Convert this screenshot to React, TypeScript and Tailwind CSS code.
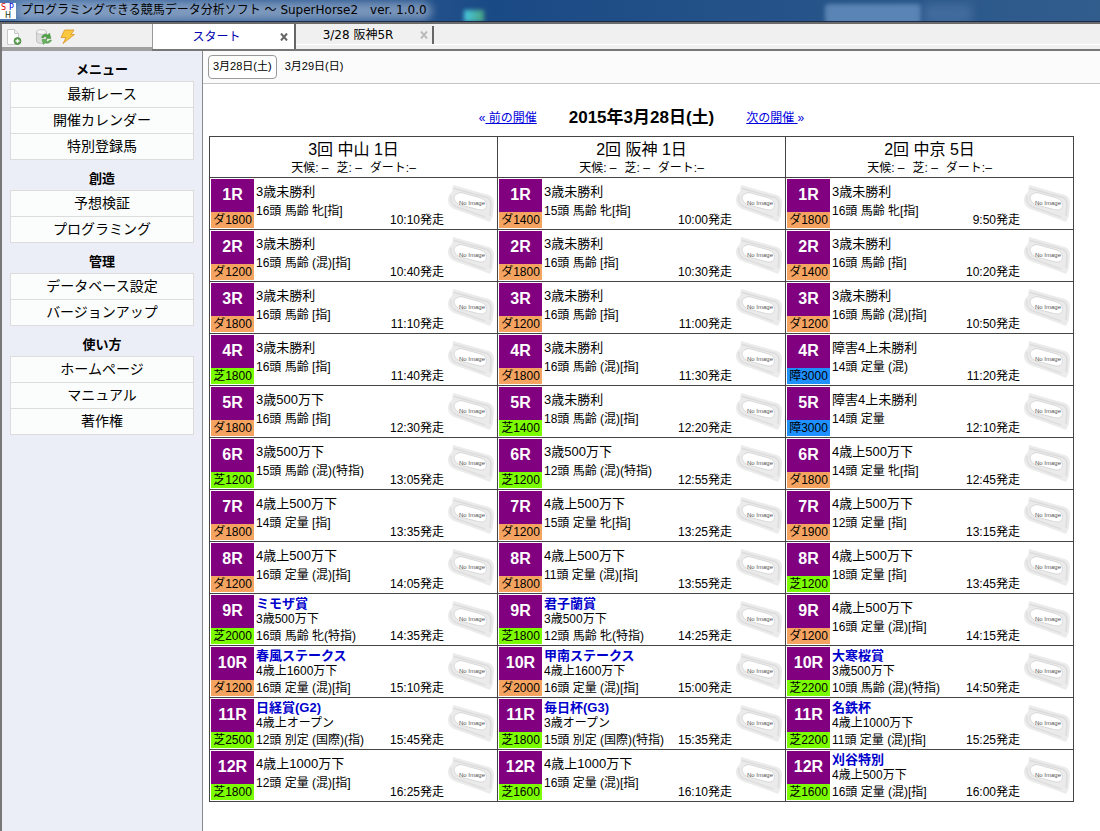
import type { ReactNode } from 'react'

type Race = {
    course: string
    name: string
    detail: string
    time: string
    title?: string
}

type Meeting = {
    name: string
    races: Race[]
}

const r = (course: string, name: string, detail: string, time: string, title?: string): Race => ({ course, name, detail, time, title })

const meetings: Meeting[] = [
    {
        name: '3回 中山 1日',
        races: [
            r('ダ1800', '3歳未勝利', '16頭 馬齢 牝[指]', '10:10'),
            r('ダ1200', '3歳未勝利', '16頭 馬齢 (混)[指]', '10:40'),
            r('ダ1800', '3歳未勝利', '16頭 馬齢 [指]', '11:10'),
            r('芝1800', '3歳未勝利', '16頭 馬齢 [指]', '11:40'),
            r('ダ1800', '3歳500万下', '16頭 馬齢 [指]', '12:30'),
            r('芝1200', '3歳500万下', '15頭 馬齢 (混)(特指)', '13:05'),
            r('ダ1800', '4歳上500万下', '14頭 定量 [指]', '13:35'),
            r('ダ1200', '4歳上500万下', '16頭 定量 (混)[指]', '14:05'),
            r('芝2000', '3歳500万下', '16頭 馬齢 牝(特指)', '14:35', 'ミモザ賞'),
            r('ダ1200', '4歳上1600万下', '16頭 定量 (混)[指]', '15:10', '春風ステークス'),
            r('芝2500', '4歳上オープン', '12頭 別定 (国際)(指)', '15:45', '日経賞(G2)'),
            r('芝1800', '4歳上1000万下', '12頭 定量 (混)[指]', '16:25'),
        ],
    },
    {
        name: '2回 阪神 1日',
        races: [
            r('ダ1400', '3歳未勝利', '15頭 馬齢 牝[指]', '10:00'),
            r('ダ1800', '3歳未勝利', '16頭 馬齢 [指]', '10:30'),
            r('ダ1200', '3歳未勝利', '16頭 馬齢 [指]', '11:00'),
            r('ダ1800', '3歳未勝利', '16頭 馬齢 (混)[指]', '11:30'),
            r('芝1400', '3歳未勝利', '18頭 馬齢 (混)[指]', '12:20'),
            r('芝1200', '3歳500万下', '12頭 馬齢 (混)(特指)', '12:55'),
            r('ダ1200', '4歳上500万下', '15頭 定量 牝[指]', '13:25'),
            r('ダ1800', '4歳上500万下', '11頭 定量 (混)[指]', '13:55'),
            r('芝1800', '3歳500万下', '12頭 馬齢 牝(特指)', '14:25', '君子蘭賞'),
            r('ダ2000', '4歳上1600万下', '16頭 定量 (混)[指]', '15:00', '甲南ステークス'),
            r('芝1800', '3歳オープン', '15頭 別定 (国際)(特指)', '15:35', '毎日杯(G3)'),
            r('芝1600', '4歳上1000万下', '16頭 定量 (混)[指]', '16:10'),
        ],
    },
    {
        name: '2回 中京 5日',
        races: [
            r('ダ1800', '3歳未勝利', '16頭 馬齢 牝[指]', '9:50'),
            r('ダ1400', '3歳未勝利', '16頭 馬齢 [指]', '10:20'),
            r('ダ1200', '3歳未勝利', '16頭 馬齢 (混)[指]', '10:50'),
            r('障3000', '障害4上未勝利', '14頭 定量 (混)', '11:20'),
            r('障3000', '障害4上未勝利', '14頭 定量', '12:10'),
            r('ダ1800', '4歳上500万下', '14頭 定量 牝[指]', '12:45'),
            r('ダ1900', '4歳上500万下', '12頭 定量 [指]', '13:15'),
            r('芝1200', '4歳上500万下', '18頭 定量 [指]', '13:45'),
            r('ダ1200', '4歳上500万下', '16頭 定量 (混)[指]', '14:15'),
            r('芝2200', '3歳500万下', '10頭 馬齢 (混)(特指)', '14:50', '大寒桜賞'),
            r('芝2200', '4歳上1000万下', '11頭 定量 (混)[指]', '15:25', '名鉄杯'),
            r('芝1600', '4歳上500万下', '16頭 定量 (混)[指]', '16:00', '刈谷特別'),
        ],
    },
]

const menu = [
    { title: 'メニュー', items: ['最新レース', '開催カレンダー', '特別登録馬'] },
    { title: '創造', items: ['予想検証', 'プログラミング'] },
    { title: '管理', items: ['データベース設定', 'バージョンアップ'] },
    { title: '使い方', items: ['ホームページ', 'マニュアル', '著作権'] },
]

function courseColor(course: string) {
    if (course.startsWith('芝')) return 'bg-[#7cfc00]'
    if (course.startsWith('障')) return 'bg-[#1e90ff]'
    return 'bg-[#f4a460]'
}

// horseshoe placeholder for a missing horse photo
function NoImage() {
    return (
        <svg viewBox="0 0 48 38" className="mt-1.5 h-[38px] w-12 shrink-0" role="img" aria-label="No Image">
            <path d="M5 0 41 10Q46 12 46 18L45 31 42 37 37 35 6 24Q0 21 0 15Q0 10 4 7Z" fill="#ebebeb" />
            <path d="M6 3.500 39 12.500Q43 14 43 20L42 31" fill="none" stroke="#dcdcdc" strokeWidth="1.500" />
            <path d="M3 11Q1.500 18 8 21.500L37 32" fill="none" stroke="#dedede" strokeWidth="1.500" />
            <path d="M13 7.500 33 13Q39 15.500 38.500 20.500T32 25L12 20Q6 17.500 6 13T13 7.500Z" fill="#fff" stroke="#dadada" strokeWidth="1" />
            <text x="24" y="20" textAnchor="middle" fontSize="6" fill="#555">No Image</text>
        </svg>
    )
}

function NewPageIcon() {
    return (
        <svg viewBox="0 0 16 16" className="size-4">
            <path d="M1.5.5h7l4 4v11h-11z" fill="#fff" stroke="#c8c8c8" />
            <path d="M8.500.5v4h4" fill="#eee" stroke="#c8c8c8" />
            <circle cx="11.500" cy="12" r="3.500" fill="#5b9f4e" stroke="#397a31" strokeWidth=".6" />
            <path d="M11.500 10v4M9.500 12h4" stroke="#fff" strokeWidth="1.300" />
        </svg>
    )
}

function DatabaseIcon() {
    return (
        <svg viewBox="0 0 16 16" className="size-4">
            <path d="M.5 3v9c0 1.500 2 2.500 5 2.500s5-1 5-2.500V3z" fill="#ddd" stroke="#b5b5b5" strokeWidth=".7" />
            <ellipse cx="5.500" cy="3" rx="5" ry="2.300" fill="#f4f4f4" stroke="#b5b5b5" strokeWidth=".7" />
            <path d="M5.500 8.500c1-3 4-4 6.500-2.500L13.500 4l1.500 5.500H10l1.200-1.500C9.500 7 8 7.500 7.200 9z" fill="#50a347" stroke="#327d2c" strokeWidth=".4" />
            <path d="M15.500 11c-1 3-4 4-6.500 2.700L7.500 15.500 6 10.500h5L9.800 12c1.500 1 3 .5 3.800-1z" fill="#66b45b" stroke="#327d2c" strokeWidth=".4" />
        </svg>
    )
}

function BoltIcon() {
    return (
        <svg viewBox="0 0 16 16" className="size-4">
            <path d="M4.500 1h9.500l-3 4.500h3.500L3 14.500 6 8.500H1z" fill="#f9c83f" stroke="#d9962b" strokeWidth=".8" strokeLinejoin="round" />
        </svg>
    )
}

function CloseIcon() {
    return (
        <svg viewBox="0 0 8 8" className="size-2">
            <path d="M1 .5 7 7.500M7 .5 1 7.500" stroke="currentColor" strokeWidth="2" />
        </svg>
    )
}

function ToolButton({ label, children }: { label: string; children: ReactNode }) {
    return <button type="button" aria-label={label}>{children}</button>
}

function TitleBar() {
    return (
        <header className="relative flex h-6 items-center overflow-hidden border-b-2 border-[#6b6b6b] bg-linear-to-r from-[#4f79ae] via-[#1a4a85] via-45% to-[#315d8d] pb-0.5">
            <div className="absolute bottom-0 left-[464px] h-3 w-5 bg-linear-to-r from-[#48c8e0] to-[#48a080] blur-[2px]" />
            <div className="absolute top-1 left-[75%] h-5 w-24 rounded bg-[#5a84b4] blur-[2px]" />
            <div className="absolute top-1 left-[84%] h-5 w-12 rounded bg-[#416b9c] blur-xs" />
            <div className="absolute top-0.5 left-4 h-[18px] w-[416px] rounded-full bg-[#9db0cc]/70 blur-xs" />
            <div className="absolute bottom-0 h-px w-full bg-[#1b2b48]" />
            <svg viewBox="0 0 16 16" className="relative mt-0.5 size-4 bg-white">
                <text x="1" y="7" fontSize="8" fill="#e00000">S</text>
                <text x="9" y="7" fontSize="8" fill="#0000d8">P</text>
                <text x="5" y="15" fontSize="8" fill="#123312">H</text>
            </svg>
            <h1 className="relative ml-[5px] whitespace-pre">プログラミングできる競馬データ分析ソフト ～ SuperHorse2　ver. 1.0.0</h1>
        </header>
    )
}

function TopBar() {
    return (
        <div className="flex h-[27px] bg-[#f0f0f0] font-['DejaVu_Sans','Noto_Sans_CJK_JP',sans-serif]">
            <div className="flex w-[150px] shrink-0 gap-2 border-b-4 border-[#a0a0a0] pt-0.5 pl-1">
                <ToolButton label="新規"><NewPageIcon /></ToolButton>
                <div className="flex gap-2 pl-1.5">
                    <ToolButton label="データ更新"><DatabaseIcon /></ToolButton>
                    <ToolButton label="実行"><BoltIcon /></ToolButton>
                </div>
            </div>
            <div className="flex flex-1 items-start border-b-2 border-[#777]">
                <div className="flex h-[25px] w-36 items-center border-r-2 border-l border-r-[#666] border-l-[#999] bg-white">
                    <button type="button" className="flex-1 text-center text-[#0000b0]">スタート</button>
                    <button type="button" aria-label="スタートを閉じる" className="mr-1.5 text-[#666]"><CloseIcon /></button>
                </div>
                <div className="flex h-[21px] flex-1 items-end border-b border-white">
                    <div className="flex h-[18px] w-[138px] items-center border-r-2 border-[#666]">
                        <button type="button" className="flex-1 text-center">3/28 阪神5R</button>
                        <button type="button" aria-label="3/28 阪神5Rを閉じる" className="mr-1 text-[#bbb]"><CloseIcon /></button>
                    </div>
                </div>
            </div>
        </div>
    )
}

function Sidebar() {
    return (
        <nav className="w-[201px] shrink-0 border-r border-[#888] bg-[#eceef7] px-2">
            {menu.map((group) => (
                <section key={group.title}>
                    <h2 className="pt-2 text-center text-[13px] leading-[22px] font-bold">{group.title}</h2>
                    <ul className="divide-y divide-[#dcdcdc] border border-[#dcdcdc] bg-[#fbfdfc]">
                        {group.items.map((item) => (
                            <li key={item}>
                                <a href="#" className="block pb-px text-center text-sm leading-6">{item}</a>
                            </li>
                        ))}
                    </ul>
                </section>
            ))}
        </nav>
    )
}

function RaceCell({ race, no }: { race: Race; no: number }) {
    return (
        <div className="flex whitespace-nowrap">
            <div className="w-[43px] shrink-0 text-center">
                <div className="bg-[purple] pb-0.5 text-base leading-[31px] font-bold text-white">{no}R</div>
                <div className={`${courseColor(race.course)} leading-4`}>{race.course}</div>
            </div>
            {race.title ? (
                <div className="min-w-0 flex-1 pt-px pl-0.5">
                    <a href="#" className="block text-[13px] leading-4 font-bold text-[#0000cd]">{race.title}</a>
                    <p className="leading-[14px]">{race.name}</p>
                    <p className="mt-0.5 leading-4">{race.detail}</p>
                </div>
            ) : (
                <div className="min-w-0 flex-1 pt-[3px] pl-0.5">
                    <p className="text-[13px] leading-5">{race.name}</p>
                    <p className="leading-[18px]">{race.detail}</p>
                </div>
            )}
            <time className="mr-1 self-end leading-4">{race.time}発走</time>
            <NoImage />
        </div>
    )
}

function RaceTable() {
    return (
        <table className="w-full table-fixed border-collapse">
            <thead>
                <tr>
                    {meetings.map((m) => (
                        <th key={m.name} scope="col" className="border border-[#444] pt-0.5 pb-px font-normal">
                            <div className="text-base leading-[21px]">{m.name}</div>
                            <div className="flex justify-center gap-2 leading-4">
                                <span>天候: –</span>
                                <span>芝: –</span>
                                <span>ダート:–</span>
                            </div>
                        </th>
                    ))}
                </tr>
            </thead>
            <tbody>
                {meetings[0].races.map((_, i) => (
                    <tr key={i}>
                        {meetings.map((m) => (
                            <td key={m.name} className="border border-[#444] p-px">
                                <RaceCell race={m.races[i]} no={i + 1} />
                            </td>
                        ))}
                    </tr>
                ))}
            </tbody>
        </table>
    )
}

export default function App() {
    return (
        <div className="flex min-h-screen flex-col bg-white font-['Liberation_Sans','Noto_Sans_CJK_JP',sans-serif] text-xs text-black">
            <div className="font-['DejaVu_Sans','Noto_Sans_CJK_JP',sans-serif]">
                <TitleBar />
            </div>
            <div className="flex flex-1 flex-col border-l-2 border-[#777]">
                <TopBar />
                <div className="flex flex-1">
                    <Sidebar />
                    <main className="min-w-0 flex-1">
                        <div className="flex h-[33px] items-center gap-2 border-b border-[#c4c4c4] bg-[#fbfbfb] px-[5px] pb-px text-[11px]">
                            <button type="button" className="h-6 rounded border border-[#999] bg-white px-1">3月28日(土)</button>
                            <button type="button">3月29日(日)</button>
                        </div>
                        <div className="pr-[26px] pl-1.5">
                            <div className="flex h-[52px] items-center justify-center gap-8 pt-4">
                                <a href="#" className="text-[#0000dd]">«<span className="whitespace-pre underline"> 前の開催</span></a>
                                <h2 className="text-[17px] font-bold">2015年3月28日(土)</h2>
                                <a href="#" className="text-[#0000dd]"><span className="whitespace-pre underline">次の開催 </span>»</a>
                            </div>
                            <RaceTable />
                        </div>
                    </main>
                </div>
            </div>
        </div>
    )
}
